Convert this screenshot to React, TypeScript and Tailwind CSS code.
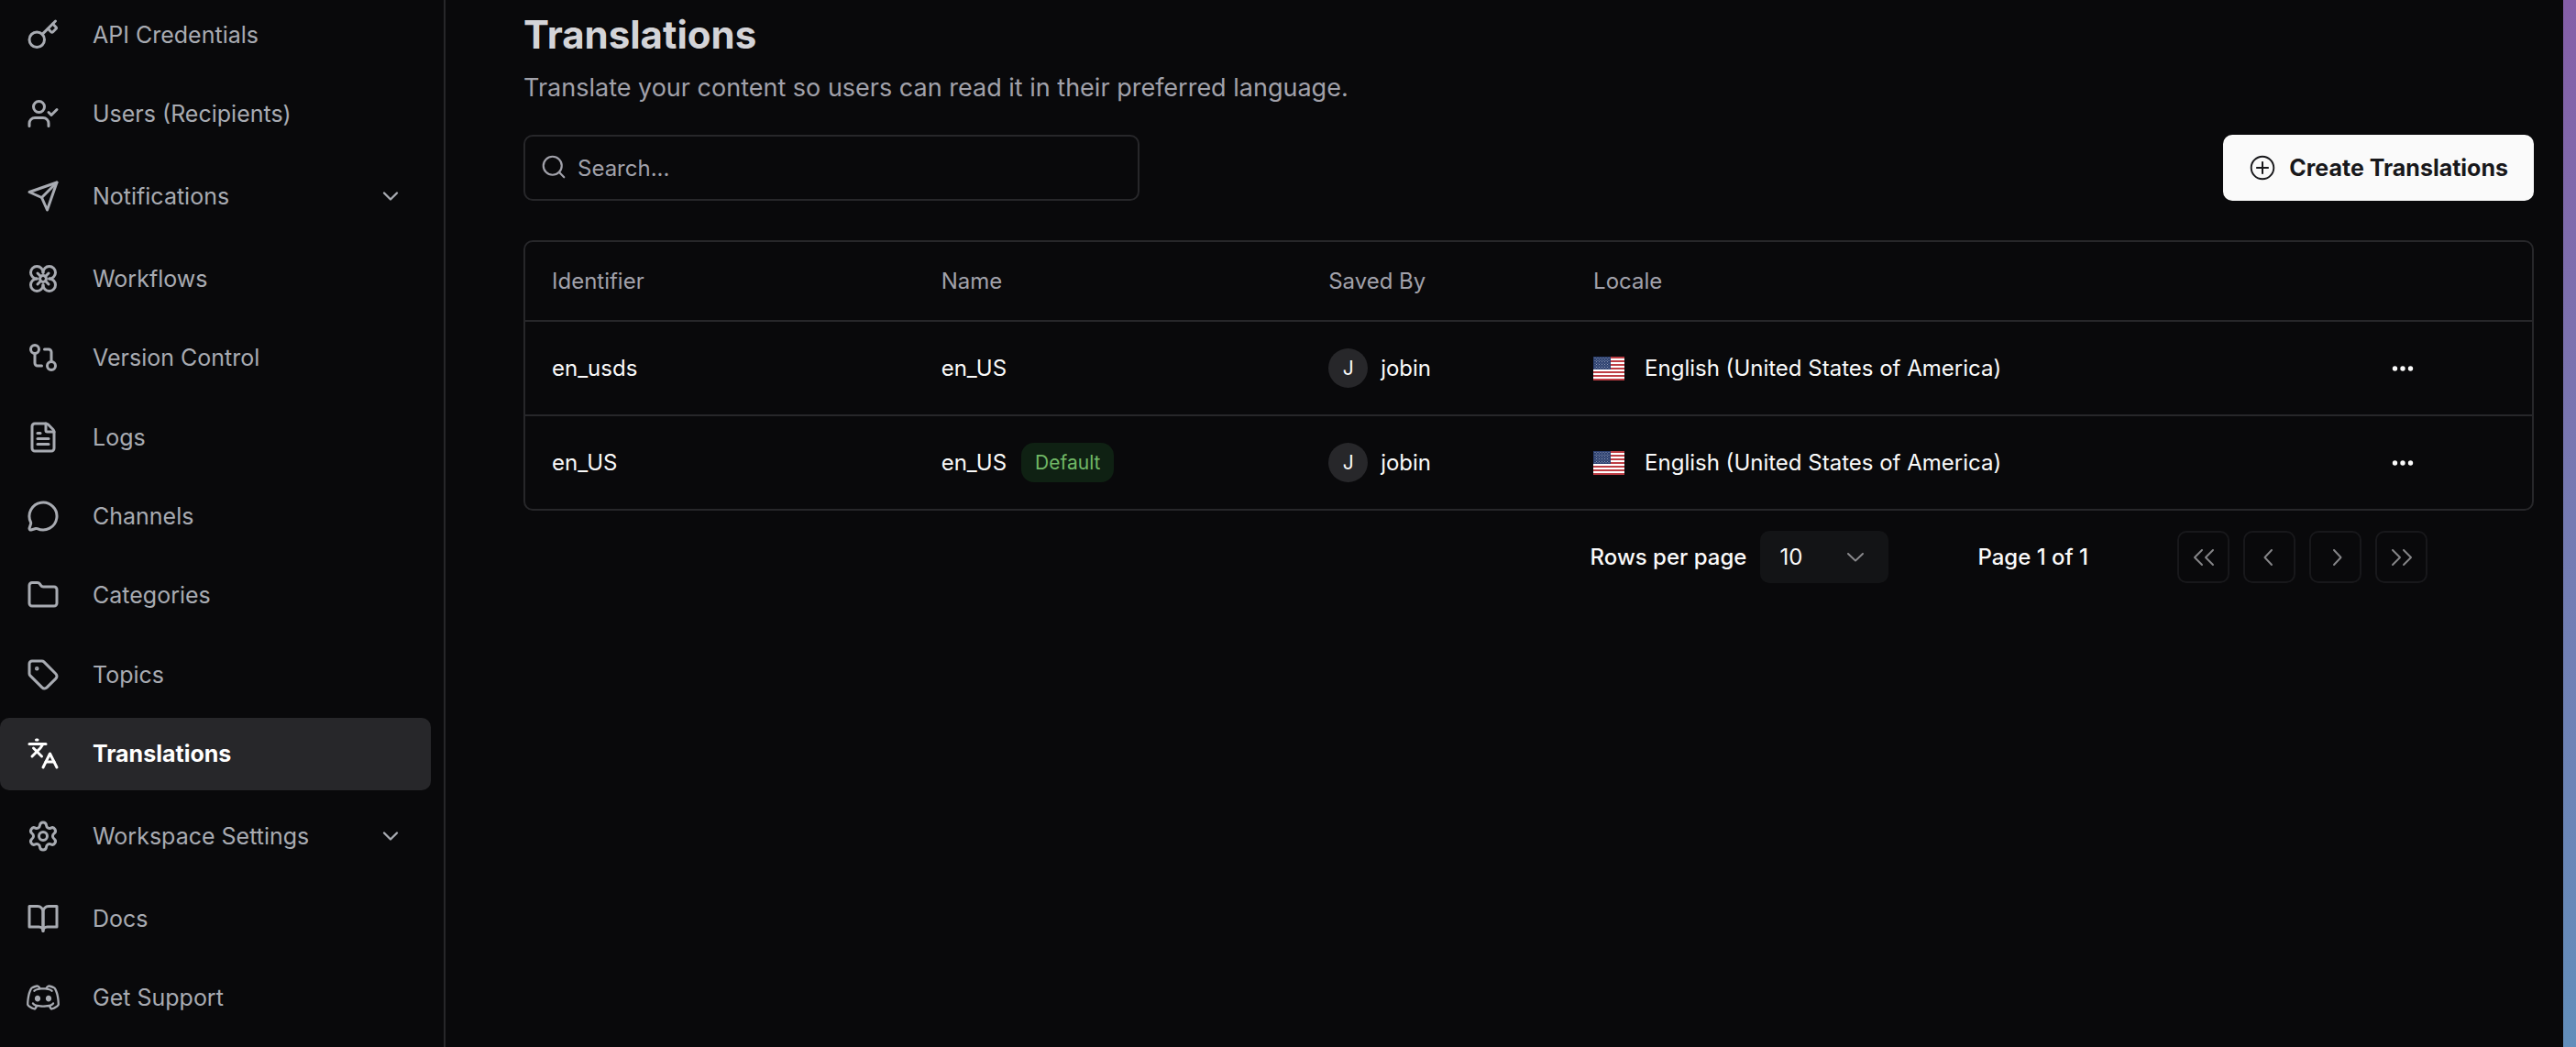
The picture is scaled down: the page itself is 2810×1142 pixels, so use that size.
import React from 'react';
import {
  ChevronDown,
  FileText,
  Folder,
  GitCompare,
  Key,
  Languages,
  MessageCircle,
  Search,
  Settings,
  Tag,
  UserCheck,
} from 'lucide-react';
import {
  RxChevronDown,
  RxChevronLeft,
  RxChevronRight,
  RxDiscordLogo,
  RxDoubleArrowLeft,
  RxDoubleArrowRight,
  RxPlusCircled,
} from 'react-icons/rx';

type IconType = React.ComponentType<{ className?: string }>;

interface StrokeIconProps {
  className?: string;
  children: React.ReactNode;
}

function StrokeIcon({ className, children }: StrokeIconProps) {
  return (
    <svg
      viewBox="0 0 24 24"
      fill="none"
      stroke="currentColor"
      strokeWidth={2}
      strokeLinecap="round"
      strokeLinejoin="round"
      className={className}
      aria-hidden="true"
    >
      {children}
    </svg>
  );
}

function SendIcon({ className }: { className?: string }) {
  return (
    <StrokeIcon className={className}>
      <path d="m22 2-7 20-4-9-9-4Z" />
      <path d="M22 2 11 13" />
    </StrokeIcon>
  );
}

function DroneIcon({ className }: { className?: string }) {
  return (
    <StrokeIcon className={className}>
      <path d="M12 7.5A4.5 4.5 0 1 0 7.5 12" />
      <path d="M16.5 12A4.5 4.5 0 1 0 12 7.5" />
      <path d="M12 16.5A4.5 4.5 0 1 0 16.5 12" />
      <path d="M7.5 12A4.5 4.5 0 1 0 12 16.5" />
      <circle cx="12" cy="12" r="2.3" />
      <path d="m8 8 2.3 2.3M16 8l-2.3 2.3M8 16l2.3-2.3M16 16l-2.3-2.3" />
    </StrokeIcon>
  );
}

function BookIcon({ className }: { className?: string }) {
  return (
    <StrokeIcon className={className}>
      <path d="M2 3h6a4 4 0 0 1 4 4v14a3 3 0 0 0-3-3H2z" />
      <path d="M22 3h-6a4 4 0 0 0-4 4v14a3 3 0 0 1 3-3h7z" />
    </StrokeIcon>
  );
}

interface NavEntry {
  label: string;
  icon: IconType;
  expandable?: boolean;
  active?: boolean;
}

const NAV_ITEMS: NavEntry[] = [
  { label: 'API Credentials', icon: Key },
  { label: 'Users (Recipients)', icon: UserCheck },
  { label: 'Notifications', icon: SendIcon, expandable: true },
  { label: 'Workflows', icon: DroneIcon },
  { label: 'Version Control', icon: GitCompare },
  { label: 'Logs', icon: FileText },
  { label: 'Channels', icon: MessageCircle },
  { label: 'Categories', icon: Folder },
  { label: 'Topics', icon: Tag },
  { label: 'Translations', icon: Languages, active: true },
  { label: 'Workspace Settings', icon: Settings, expandable: true },
  { label: 'Docs', icon: BookIcon },
  { label: 'Get Support', icon: RxDiscordLogo },
];

const ROWS = [
  { identifier: 'en_usds', name: 'en_US', isDefault: false },
  { identifier: 'en_US', name: 'en_US', isDefault: true },
];

const PAGER: { label: string; icon: IconType }[] = [
  { label: 'First page', icon: RxDoubleArrowLeft },
  { label: 'Previous page', icon: RxChevronLeft },
  { label: 'Next page', icon: RxChevronRight },
  { label: 'Last page', icon: RxDoubleArrowRight },
];

function NavItem({ label, icon: Icon, expandable, active }: NavEntry) {
  const content = (
    <>
      <Icon className="size-9 shrink-0" />
      <span className="flex-1 text-left">{label}</span>
      {expandable && <ChevronDown className="size-7 shrink-0" />}
    </>
  );

  if (expandable) {
    return (
      <button
        type="button"
        aria-expanded={false}
        className="flex h-[86px] w-full items-center gap-9 pr-[30px] pl-[29px] text-[#a8abb2]"
      >
        {content}
      </button>
    );
  }

  return (
    <a
      href="#"
      aria-current={active ? 'page' : undefined}
      className={`flex h-[79px] items-center gap-9 rounded-[10px] pr-[30px] pl-[29px] ${
        active ? 'bg-[#27272a] font-bold text-white' : 'text-[#a8abb2]'
      }`}
    >
      {content}
    </a>
  );
}

function Sidebar() {
  return (
    <aside className="flex w-[486px] shrink-0 flex-col overflow-hidden border-r-2 border-[#27272a] pr-[14px] pb-[14px] text-[25px]">
      <nav aria-label="Main" className="-mt-0.5 flex flex-1 flex-col">
        <ul className="flex flex-1 flex-col justify-between">
          {NAV_ITEMS.map((item) => (
            <li key={item.label}>
              <NavItem {...item} />
            </li>
          ))}
        </ul>
      </nav>
    </aside>
  );
}

/** US flag: 13 stripes with a dotted blue canton. */
function UsFlag() {
  const stars = [];
  for (let row = 0; row < 9; row++) {
    const count = row % 2 === 0 ? 6 : 5;
    for (let col = 0; col < count; col++) {
      const x = (row % 2 === 0 ? 2 : 3.5) + col * 3;
      stars.push(<circle key={`${row}-${col}`} cx={x} cy={1.5 + row * 1.4} r="0.45" fill="#fff" />);
    }
  }
  return (
    <svg viewBox="0 0 34 26" className="h-[26px] w-[34px] shrink-0" aria-hidden="true">
      <rect width="34" height="26" fill="#fff" />
      {[0, 4, 8, 12, 16, 20, 24].map((y) => (
        <rect key={y} y={y} width="34" height="2" fill="#bd3d44" />
      ))}
      <rect width="19" height="14" fill="#2b3f6f" />
      {stars}
    </svg>
  );
}

function TranslationsTable() {
  return (
    <div className="mt-[43px] overflow-hidden rounded-[10px] border-2 border-[#27272a]">
      <table className="w-full table-fixed text-left">
        <colgroup>
          <col className="w-[19.4%]" />
          <col className="w-[19.3%]" />
          <col className="w-[13.2%]" />
          <col className="w-[38.5%]" />
          <col />
        </colgroup>
        <thead>
          <tr className="h-[86px] border-b-2 border-[#27272a] text-[#a1a1aa]">
            <th scope="col" className="px-[29px] font-normal">Identifier</th>
            <th scope="col" className="px-[29px] font-normal">Name</th>
            <th scope="col" className="px-[29px] font-normal">Saved By</th>
            <th scope="col" className="px-[29px] font-normal">Locale</th>
            <th scope="col" aria-label="Actions" />
          </tr>
        </thead>
        <tbody className="text-[#fafafa]">
          {ROWS.map((row) => (
            <tr key={row.identifier} className="h-[103px] border-b-2 border-[#27272a] last:h-[102px] last:border-b-0">
              <td className="px-[29px]">{row.identifier}</td>
              <td className="px-[29px]">
                <div className="flex items-center gap-4">
                  {row.name}
                  {row.isDefault && (
                    <span className="flex h-[43px] items-center rounded-[14px] bg-[#0f2113] px-[15px] text-[21px] text-[#71b866]">
                      Default
                    </span>
                  )}
                </div>
              </td>
              <td className="px-[29px]">
                <div className="flex items-center gap-[14px]">
                  <span className="flex size-[43px] items-center justify-center rounded-full bg-[#27272a] text-[21px]">
                    J
                  </span>
                  jobin
                </div>
              </td>
              <td className="px-[29px]">
                <div className="flex items-center gap-[22px]">
                  <UsFlag />
                  English (United States of America)
                </div>
              </td>
              <td className="px-[29px]">
                <button type="button" aria-label="Row actions" className="flex h-12 w-20 items-center justify-center">
                  <svg viewBox="0 0 24 6" className="h-1.5 w-6" fill="currentColor" aria-hidden="true">
                    <circle cx="3.5" cy="3" r="2.7" />
                    <circle cx="12" cy="3" r="2.7" />
                    <circle cx="20.5" cy="3" r="2.7" />
                  </svg>
                </button>
              </td>
            </tr>
          ))}
        </tbody>
      </table>
    </div>
  );
}

function Pagination() {
  return (
    <div className="mt-[22px] flex items-center justify-end pr-[116px] font-medium text-[#fafafa]">
      <label htmlFor="rows-per-page">Rows per page</label>
      <div className="relative ml-[15px]">
        <select
          id="rows-per-page"
          defaultValue="10"
          className="h-[57px] w-[140px] appearance-none rounded-[10px] bg-[#131416] px-[21px] font-normal"
        >
          <option value="10">10</option>
          <option value="20">20</option>
          <option value="50">50</option>
        </select>
        <RxChevronDown className="pointer-events-none absolute top-3 right-[21px] size-[30px] text-[#8a8a8d]" />
      </div>
      <span className="ml-[97px]">Page 1 of 1</span>
      <div className="ml-[97px] flex gap-[15px]">
        {PAGER.map(({ label, icon: Icon }) => (
          <button
            key={label}
            type="button"
            aria-label={label}
            disabled
            className="flex size-[57px] items-center justify-center rounded-[10px] border-2 border-[#18181b] text-[#858588]"
          >
            <Icon className="size-[30px]" />
          </button>
        ))}
      </div>
    </div>
  );
}

export default function App() {
  return (
    <div className="flex min-h-screen overflow-hidden bg-[#09090b] font-['Inter',sans-serif] text-[24px] leading-8">
      <Sidebar />
      <main className="min-w-0 flex-1 pt-[14px] pr-8 pl-[85px]">
        <h1 className="text-[42px] leading-[48px] font-bold text-[#d4d4d8]">Translations</h1>
        <p className="mt-[14px] text-[27px] leading-10 text-[#a1a1aa]">
          Translate your content so users can read it in their preferred language.
        </p>
        <div className="mt-[31px] flex items-center justify-between">
          <div className="relative w-[672px]">
            <Search className="absolute top-5 left-[18px] size-[30px] text-[#a1a1aa]" strokeWidth={1.75} />
            <input
              type="search"
              aria-label="Search translations"
              placeholder="Search..."
              className="h-[72px] w-full rounded-[10px] border-2 border-[#27272a] bg-transparent pr-4 pl-[57px] text-white placeholder:text-[#a1a1aa]"
            />
          </div>
          <button
            type="button"
            className="flex h-[72px] items-center gap-[14px] rounded-[10px] bg-[#fafafa] px-7 text-[25px] font-bold text-[#18181b]"
          >
            <RxPlusCircled className="size-[30px]" />
            Create Translations
          </button>
        </div>
        <TranslationsTable />
        <Pagination />
      </main>
      <div className="w-[14px] shrink-0 bg-linear-to-b from-[#855fa8] via-[#757bb3] to-[#628ebb]" />
    </div>
  );
}
